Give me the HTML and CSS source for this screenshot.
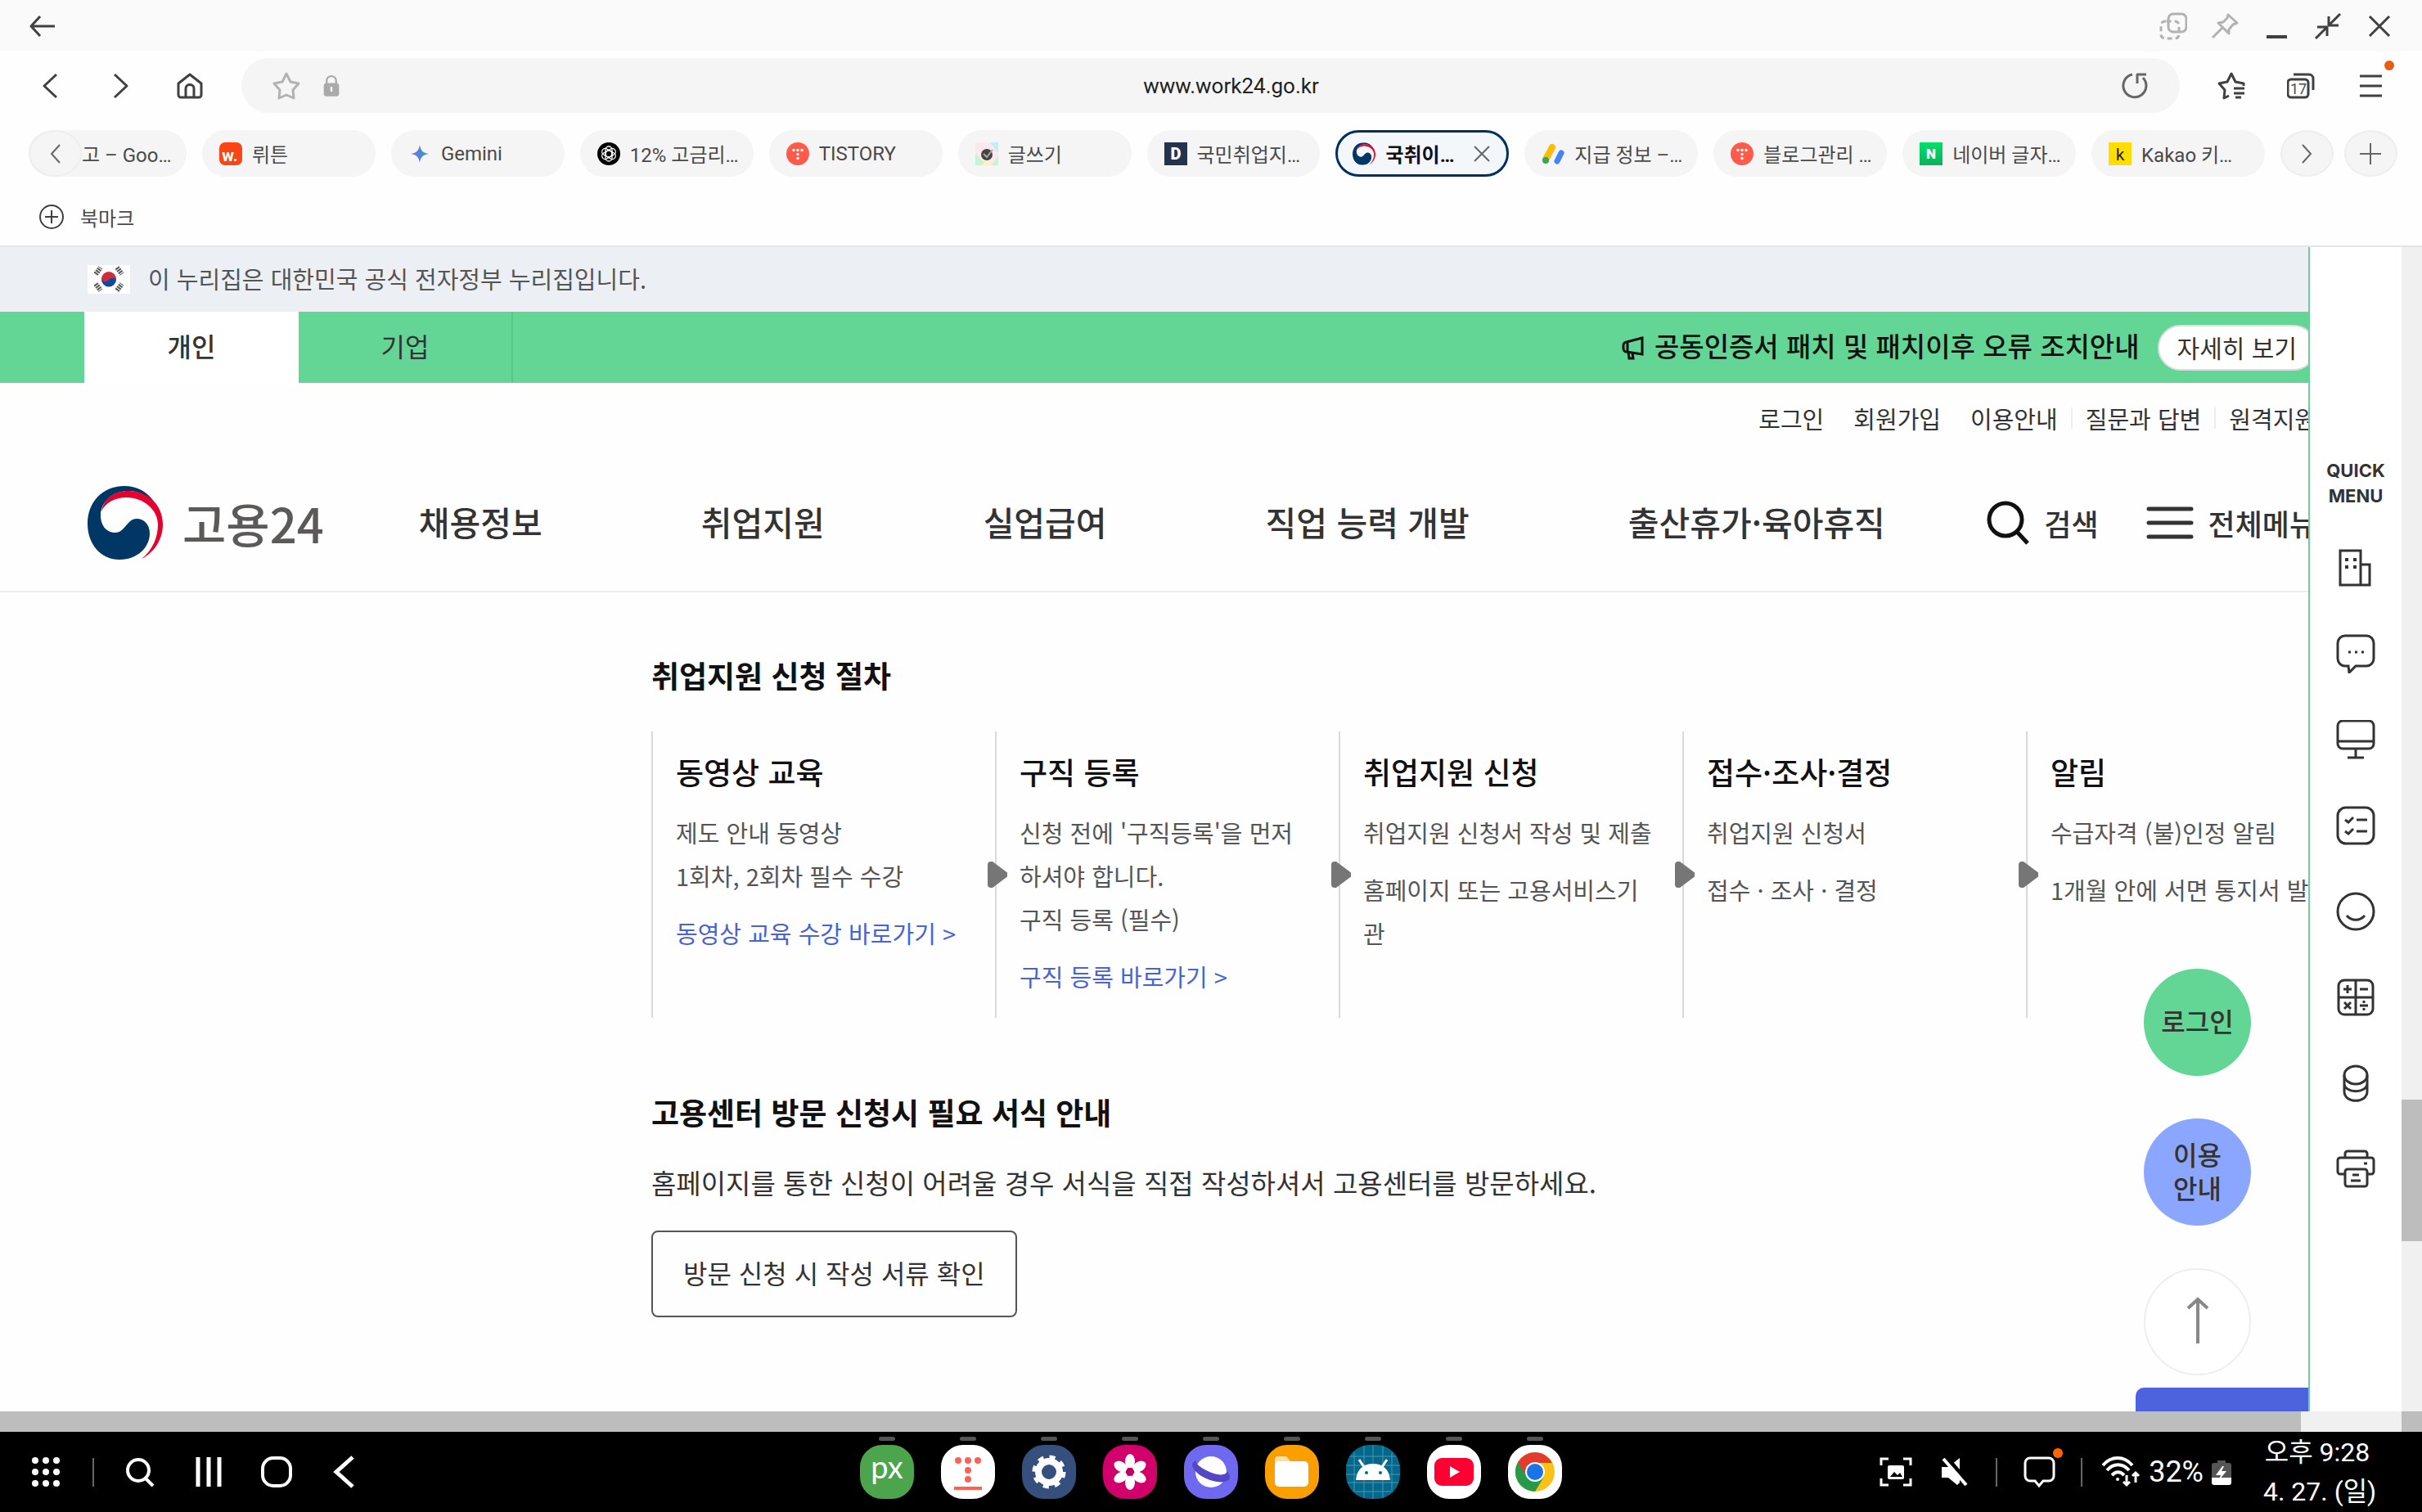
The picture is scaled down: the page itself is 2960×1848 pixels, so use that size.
FILE: index.html
```html
<!DOCTYPE html>
<html lang="ko">
<head>
    <meta charset="UTF-8">
    <meta name="viewport" content="width=device-width, initial-scale=1.0">
    <title>고용24</title>
    <link rel="stylesheet" href="styles.css">
</head>
<body>
    <svg class="sprite" aria-hidden="true">
        <symbol id="gov" viewBox="0 0 92 90">
            <path fill="#003764" d="M82 20C72 6 60 0 45 0 18 0 0 20 0 46c0 26 17 44 39 44 23 0 37-16 37-32 0-11-7-18-16-18-12 0-14 17-26 17-12 0-18-10-18-21C16 20 30 6 50 6c12 0 24 6 32 14z"/>
            <path fill="#e4032e" d="M17 31C20 15 33 6 50 6c25 0 42 18 42 41 0 18-10 34-26 42 14-11 20-27 20-42 0-18-18-33-38-33-15 0-27 7-31 17z"/>
        </symbol>
        <symbol id="tistory" viewBox="0 0 28 28">
            <circle cx="14" cy="14" r="14" fill="#ff5a4a"/>
            <g fill="#fff"><circle cx="9" cy="9.500" r="1.700"/><circle cx="14" cy="9.500" r="1.700"/><circle cx="19" cy="9.500" r="1.700"/><circle cx="14" cy="14.500" r="1.700"/><circle cx="14" cy="19.500" r="1.700"/></g>
        </symbol>
    </svg>

    <header class="titlebar">
        <button class="icon-btn" aria-label="뒤로"><svg viewBox="0 0 34 34"><path d="M14 5 3 17l11 12M3 17h29"/></svg></button>
        <div class="window-buttons">
            <button class="icon-btn dim" aria-label="팝업 화면"><svg viewBox="0 0 34 34"><rect x="11" y="2" width="22" height="22" rx="6"/><path stroke-dasharray="6 4" d="M8 11H7a5 5 0 0 0-5 5v11a5 5 0 0 0 5 5h12a5 5 0 0 0 5-5V16a5 5 0 0 0-5-5z"/></svg></button>
            <button class="icon-btn dim" aria-label="고정"><svg viewBox="0 0 34 34"><path d="M21 3 32 13l-5 2-5 6 0 5-13-13 6-1 5-5zM14 19 2 31"/></svg></button>
            <button class="icon-btn" aria-label="최소화"><svg viewBox="0 0 34 34"><path stroke-width="4" d="M5 30h25"/></svg></button>
            <button class="icon-btn" aria-label="축소"><svg viewBox="0 0 34 34"><path d="M32 2 19 15M18 5v11h12M2 32l13-13M4 18h12v11"/></svg></button>
            <button class="icon-btn" aria-label="닫기"><svg viewBox="0 0 34 34"><path d="M5 5l24 24M29 5 5 29"/></svg></button>
        </div>
    </header>

    <div class="toolbar">
        <div class="address-row">
            <button class="icon-btn" aria-label="이전"><svg viewBox="0 0 34 34"><path d="M24 3 9 17l15 14"/></svg></button>
            <button class="icon-btn" aria-label="다음"><svg viewBox="0 0 34 34"><path d="M10 3l15 14-15 14"/></svg></button>
            <button class="icon-btn" aria-label="홈"><svg viewBox="0 0 34 34"><path d="M3 14 17 3l14 11v14a3 3 0 0 1-3 3H6a3 3 0 0 1-3-3zM12 31V20c0-6 10-6 10 0v11"/></svg></button>
            <div class="address">
                <button class="icon-btn dim" aria-label="북마크 추가"><svg viewBox="0 0 34 34"><path d="M17 2l5 10 10 2-7 8 1 10-9-4-9 4 1-10-7-8 10-2z"/></svg></button>
                <svg class="lock" viewBox="0 0 20 24"><rect x="2" y="9" width="16" height="14" rx="3" fill="#aaa"/><path d="M5 10V7c0-7 10-7 10 0v3" fill="none" stroke="#aaa" stroke-width="2"/><path d="M10 13v5" stroke="#fff" stroke-width="2"/></svg>
                <input type="text" aria-label="주소" value="www.work24.go.kr">
                <button class="icon-btn mid" aria-label="새로고침"><svg viewBox="0 0 34 34"><path d="M14 3A14 14 0 1 0 27 7M20 14V3h11"/></svg></button>
            </div>
            <button class="icon-btn" aria-label="북마크 목록"><svg viewBox="0 0 34 34"><path d="M32 17V14l-10-2-5-10-5 10-10 2 7 8-1 10 6-3M20 20h13M20 26h13M22 31h7"/></svg></button>
            <button class="icon-btn tab-count" aria-label="탭"><svg viewBox="0 0 34 34"><rect x="1" y="9" width="25" height="22" rx="4"/><path d="M8 3h19a5 5 0 0 1 5 5v14"/></svg><span>17</span></button>
            <button class="icon-btn has-dot" aria-label="메뉴"><svg viewBox="0 0 34 34"><path d="M4 5h27M4 17h27M4 29h27"/></svg></button>
        </div>

        <nav class="tabs" aria-label="열린 탭">
            <div class="tab first"><button class="round-btn" aria-label="이전 탭"><svg viewBox="0 0 34 34"><path d="M22 6 12 17l10 11"/></svg></button><a href="#">고 – Goo…</a></div>
            <a class="tab" href="#"><svg viewBox="0 0 28 28"><rect width="28" height="28" rx="7" fill="#fa4616"/><text x="13" y="23" font-size="20" font-weight="bold" text-anchor="middle" fill="#fff">w.</text></svg>뤼튼</a>
            <a class="tab" href="#"><svg viewBox="0 0 28 28"><linearGradient id="gem"><stop stop-color="#a06bb0"/><stop offset=".5" stop-color="#4f86dc"/><stop offset="1" stop-color="#2da0d8"/></linearGradient><path fill="url(#gem)" d="M14 3c1 7 4 10 11 11-7 1-10 4-11 11-1-7-4-10-11-11 7-1 10-4 11-11z"/></svg>Gemini</a>
            <a class="tab" href="#"><svg viewBox="0 0 28 28"><circle cx="14" cy="14" r="14"/><g fill="none" stroke="#fff" stroke-width="1.300"><rect x="10" y="5" width="8" height="13" rx="4"/><rect x="10" y="5" width="8" height="13" rx="4" transform="rotate(60 14 14)"/><rect x="10" y="5" width="8" height="13" rx="4" transform="rotate(120 14 14)"/><rect x="10" y="5" width="8" height="13" rx="4" transform="rotate(180 14 14)"/><rect x="10" y="5" width="8" height="13" rx="4" transform="rotate(240 14 14)"/><rect x="10" y="5" width="8" height="13" rx="4" transform="rotate(300 14 14)"/></g></svg>12% 고금리…</a>
            <a class="tab" href="#"><svg viewBox="0 0 28 28"><use href="#tistory"/></svg>TISTORY</a>
            <a class="tab" href="#"><svg viewBox="0 0 28 28"><path fill="#fde8ee" d="M0 0h28v28H0z"/><path fill="#bdf0f0" d="M18 0h10v13z"/><path fill="#c5f5cd" d="M0 14l14 14H0zM28 16v12h-8z"/><path fill="#fdf3b8" d="M8 28l6-8 6 8z"/><circle cx="14" cy="15" r="7" fill="#444"/><path d="M10 14l4 4 7-9" fill="none" stroke="#aaa" stroke-width="2"/></svg>글쓰기</a>
            <a class="tab" href="#"><svg viewBox="0 0 28 28"><path fill="#25324f" d="M0 0h28v28H0z"/><text x="14" y="21" font-size="20" font-weight="900" text-anchor="middle" fill="#fff">D</text></svg>국민취업지…</a>
            <div class="tab active"><a href="#"><svg viewBox="0 0 92 90"><use href="#gov"/></svg>국취이…</a><button class="close" aria-label="탭 닫기"><svg viewBox="0 0 20 20"><path d="M1 1l18 18M19 1 1 19"/></svg></button></div>
            <a class="tab" href="#"><svg viewBox="0 0 28 28"><path d="M13 6 5 21" stroke="#fbbc04" stroke-width="8" stroke-linecap="round"/><path d="M24 13l-5 10" stroke="#4285f4" stroke-width="7" stroke-linecap="round"/><circle cx="5" cy="22" r="4" fill="#34a853"/></svg>지급 정보 –…</a>
            <a class="tab" href="#"><svg viewBox="0 0 28 28"><use href="#tistory"/></svg>블로그관리 …</a>
            <a class="tab" href="#"><svg viewBox="0 0 28 28"><linearGradient id="nav" x2="0" y2="1"><stop stop-color="#00e06a"/><stop offset="1" stop-color="#0bb25c"/></linearGradient><path fill="url(#nav)" d="M0 0h28v28H0z"/><text x="14" y="20" font-size="17" font-weight="900" text-anchor="middle" fill="#fff">N</text></svg>네이버 글자…</a>
            <a class="tab" href="#"><svg viewBox="0 0 28 28"><path fill="#fd0" d="M0 0h28v28H0z"/><text x="14" y="22" font-size="21" text-anchor="middle" fill="#222">k</text></svg>Kakao 키…</a>
            <button class="round-btn" aria-label="다음 탭"><svg viewBox="0 0 34 34"><path d="M12 6l10 11-10 11"/></svg></button>
            <button class="round-btn new-tab" aria-label="새 탭"><svg viewBox="0 0 34 34"><path d="M17 4v26M4 17h26"/></svg></button>
        </nav>

        <div class="bookmarks">
            <button class="icon-btn thin" aria-label="북마크 추가"><svg viewBox="0 0 34 34"><circle cx="17" cy="17" r="14"/><path d="M17 9v16M9 17h16"/></svg></button>
            <a href="#">북마크</a>
        </div>
    </div>

    <div class="viewport">
        <main class="site">
            <div class="gov-banner">
                <svg viewBox="0 0 52 35"><path fill="#fff" d="M0 0h52v35H0z"/><circle cx="26" cy="17" r="9" fill="#cd2e3a"/><path fill="#0f4aa0" d="M17 17c2 4 6 4 9 1s7-3 9 0a9 9 0 0 1-18-1z"/><path stroke="#555" stroke-width="6" stroke-dasharray="2 1" d="M10 11l6-8M36 31l6-8M10 23l6 8M36 3l6 8"/></svg>
                <p>이 누리집은 대한민국 공식 전자정부 누리집입니다.</p>
            </div>

            <div class="member-bar">
                <a class="member on" href="#">개인</a>
                <a class="member" href="#">기업</a>
                <p class="notice"><svg viewBox="0 0 30 30"><path d="M27 3v20L8 20a4 4 0 0 1-4-4v-4a4 4 0 0 1 4-4zM9 9v11M10 21l1 7h5l-1-6" fill="none" stroke="#111" stroke-width="3"/></svg>공동인증서 패치 및 패치이후 오류 조치안내</p>
                <button class="more">자세히 보기</button>
            </div>

            <header class="site-header">
                <ul class="util">
                    <li><a href="#">로그인</a></li>
                    <li><a href="#">회원가입</a></li>
                    <li><a href="#">이용안내</a></li>
                    <li class="line"><a href="#">질문과 답변</a></li>
                    <li class="line"><a href="#">원격지원</a></li>
                </ul>
                <div class="gnb">
                    <a class="logo" href="#"><svg viewBox="0 0 92 90"><use href="#gov"/></svg>고용24</a>
                    <nav class="menu">
                        <a href="#">채용정보</a>
                        <a href="#">취업지원</a>
                        <a href="#">실업급여</a>
                        <a href="#">직업 능력 개발</a>
                        <a href="#">출산휴가·육아휴직</a>
                    </nav>
                    <div class="tools">
                        <button><svg class="search-icon" viewBox="0 0 52 54"><circle cx="23" cy="23" r="20" fill="none" stroke="#111" stroke-width="5"/><path d="M37 38l13 14" stroke="#111" stroke-width="5"/></svg>검색</button>
                        <button><svg class="menu-icon" viewBox="0 0 58 42"><path d="M3 4h52M3 21h52M3 38h52" stroke="#333" stroke-width="5" stroke-linecap="round"/></svg>전체메뉴</button>
                    </div>
                </div>
            </header>

            <div class="content">
                <section>
                    <h2>취업지원 신청 절차</h2>
                    <ol class="steps">
                        <li>
                            <h3>동영상 교육</h3>
                            <p>제도 안내 동영상<br>1회차, 2회차 필수 수강</p>
                            <a href="#">동영상 교육 수강 바로가기 &gt;</a>
                        </li>
                        <li>
                            <h3>구직 등록</h3>
                            <p>신청 전에 '구직등록'을 먼저<br>하셔야 합니다.<br>구직 등록 (필수)</p>
                            <a href="#">구직 등록 바로가기 &gt;</a>
                        </li>
                        <li>
                            <h3>취업지원 신청</h3>
                            <p>취업지원 신청서 작성 및 제출</p>
                            <p>홈페이지 또는 고용서비스기관</p>
                        </li>
                        <li>
                            <h3>접수·조사·결정</h3>
                            <p>취업지원 신청서</p>
                            <p>접수 · 조사 · 결정</p>
                        </li>
                        <li>
                            <h3>알림</h3>
                            <p>수급자격 (불)인정 알림</p>
                            <p>1개월 안에 서면 통지서 발송</p>
                        </li>
                    </ol>
                </section>

                <section class="visit">
                    <h2>고용센터 방문 신청시 필요 서식 안내</h2>
                    <p>홈페이지를 통한 신청이 어려울 경우 서식을 직접 작성하셔서 고용센터를 방문하세요.</p>
                    <button class="outline-btn">방문 신청 시 작성 서류 확인</button>
                </section>
            </div>

            <div class="floating">
                <a class="circle green" href="#">로그인</a>
                <a class="circle blue" href="#">이용<br>안내</a>
                <a class="circle top" href="#" aria-label="맨 위로"><svg viewBox="0 0 28 58"><path d="M14 57V4M2 14 14 3l12 11" fill="none" stroke="#888" stroke-width="4"/></svg></a>
            </div>
            <div class="chat-panel"></div>
        </main>

        <aside class="quick">
            <strong>QUICK<br>MENU</strong>
            <a href="#" aria-label="기업"><svg viewBox="0 0 48 48"><path d="M5 3h25v42H5zM30 20h11v25H30z"/><path stroke-width="4" stroke-dasharray="4 6" d="M11 14h14M11 23h14"/></svg></a>
            <a href="#" aria-label="상담"><svg viewBox="0 0 48 48"><path d="M11 2h26a9 9 0 0 1 9 9v19a9 9 0 0 1-9 9H24l-8 8-1-8h-4a9 9 0 0 1-9-9V11a9 9 0 0 1 9-9z"/><path stroke-width="3" stroke-dasharray="3 5" d="M15 22h20"/></svg></a>
            <a href="#" aria-label="화면"><svg viewBox="0 0 48 48"><rect x="2" y="1" width="44" height="34" rx="6"/><path d="M2 26h44M24 35v11M14 46h20"/></svg></a>
            <a href="#" aria-label="체크리스트"><svg viewBox="0 0 48 48"><rect x="2" y="2" width="44" height="44" rx="10"/><path d="M11 17l4 3 6-6M25 17h13M11 31l4 3 6-6M25 31h13"/></svg></a>
            <a href="#" aria-label="만족도"><svg viewBox="0 0 48 48"><circle cx="24" cy="24" r="22"/><path d="M13 29c6 7 16 7 22 0"/></svg></a>
            <a href="#" aria-label="계산기"><svg viewBox="0 0 48 48"><rect x="3" y="3" width="42" height="42" rx="7"/><path d="M24 3v42M3 24h42M9 14h10M14 9v10M29 14h10M10 30l8 8M18 30l-8 8M29 34h10M34 28v3M34 37v3"/></svg></a>
            <a href="#" aria-label="지원금"><svg viewBox="0 0 48 48"><ellipse cx="24" cy="14" rx="14" ry="11"/><path d="M10 14v20c0 15 28 15 28 0V14M10 24c0 13 28 13 28 0"/></svg></a>
            <a href="#" aria-label="인쇄"><svg viewBox="0 0 48 48"><path d="M11 10V5a3 3 0 0 1 3-3h21a3 3 0 0 1 3 3v5M11 30H5a3 3 0 0 1-3-3V13a3 3 0 0 1 3-3h38a3 3 0 0 1 3 3v14a3 3 0 0 1-3 3h-5M34 17h4M20 31h8M18 38h12"/><rect x="11" y="24" width="27" height="21" rx="3"/></svg></a>
        </aside>
        <div class="scroll-y"><div class="thumb"></div></div>
    </div>
    <div class="scroll-x"><div class="thumb"></div><div class="corner"></div></div>

    <footer class="taskbar">
        <div class="task-left">
            <button aria-label="앱 목록"><svg viewBox="0 0 40 40"><g fill="#fff" stroke="none"><circle cx="7" cy="6" r="4"/><circle cx="20" cy="6" r="4"/><circle cx="33" cy="6" r="4"/><circle cx="7" cy="20" r="4"/><circle cx="20" cy="20" r="4"/><circle cx="33" cy="20" r="4"/><circle cx="7" cy="34" r="4"/><circle cx="20" cy="34" r="4"/><circle cx="33" cy="34" r="4"/></g></svg></button>
            <span class="divider"></span>
            <button aria-label="검색"><svg viewBox="0 0 40 40"><circle cx="17" cy="18" r="13"/><path d="M26 28l9 9"/></svg></button>
            <button aria-label="최근 앱"><svg viewBox="0 0 40 40"><path stroke-width="5" d="M7 2v36M20 2v36M33 2v36"/></svg></button>
            <button aria-label="홈 화면"><svg viewBox="0 0 40 40"><rect x="3" y="3" width="34" height="34" rx="13"/></svg></button>
            <button aria-label="뒤로 가기"><svg viewBox="0 0 40 40"><path stroke-width="5" d="M30 2 10 20l20 18"/></svg></button>
        </div>

        <div class="apps">
            <a class="app" href="#" aria-label="Pixabay"><svg viewBox="0 0 66 66"><rect width="66" height="66" rx="27" fill="#4ca54c"/><text x="33" y="41" font-family="Lato" font-size="38" text-anchor="middle" fill="#fff">px</text></svg></a>
            <a class="app" href="#" aria-label="티스토리"><svg viewBox="0 0 66 66"><rect width="66" height="66" rx="27" fill="#fff"/><g fill="#f76455"><circle cx="21" cy="19" r="4"/><circle cx="33" cy="19" r="4"/><circle cx="45" cy="19" r="4"/><circle cx="33" cy="31" r="4"/><circle cx="33" cy="42" r="4"/><path d="M16 51h34v4H16z"/></g></svg></a>
            <a class="app" href="#" aria-label="설정"><svg viewBox="0 0 66 66"><rect width="66" height="66" rx="27" fill="#35507c"/><circle cx="33" cy="33" r="13" fill="none" stroke="#fff" stroke-width="8"/><circle cx="33" cy="33" r="18" fill="none" stroke="#fff" stroke-width="5" stroke-dasharray="7 7.140"/></svg></a>
            <a class="app" href="#" aria-label="갤러리"><svg viewBox="0 0 66 66"><rect width="66" height="66" rx="27" fill="#d1006a"/><g fill="#fff"><ellipse cx="33" cy="20" rx="6" ry="9"/><ellipse cx="33" cy="20" rx="6" ry="9" transform="rotate(60 33 33)"/><ellipse cx="33" cy="20" rx="6" ry="9" transform="rotate(120 33 33)"/><ellipse cx="33" cy="20" rx="6" ry="9" transform="rotate(180 33 33)"/><ellipse cx="33" cy="20" rx="6" ry="9" transform="rotate(240 33 33)"/><ellipse cx="33" cy="20" rx="6" ry="9" transform="rotate(300 33 33)"/></g><circle cx="33" cy="33" r="5" fill="#c4005f"/></svg></a>
            <a class="app" href="#" aria-label="인터넷"><svg viewBox="0 0 66 66"><rect width="66" height="66" rx="27" fill="#6f69ef"/><circle cx="33" cy="33" r="19" fill="#fff"/><path d="M15 19c-8 2-6 12 8 20 16 9 34 8 33 0 0-3-2-5-4-7 1 6-13 6-25-1-9-5-14-9-12-12z" fill="#5546c4"/></svg></a>
            <a class="app" href="#" aria-label="내 파일"><svg viewBox="0 0 66 66"><rect width="66" height="66" rx="27" fill="#fb9f00"/><path fill="#ffdf9e" d="M12 18a4 4 0 0 1 4-4h10l6 7v8H12z"/><rect x="12" y="20" width="41" height="31" rx="5" fill="#fff"/></svg></a>
            <a class="app" href="#" aria-label="Android"><svg viewBox="0 0 66 66"><rect width="66" height="66" rx="29" fill="#03688b"/><path stroke="#4a97af" d="M10 9v48M22 1v64M33 0v66M45 1v64M56 9v48M5 14h56M0 25h66M0 36h66M2 46h62M11 57h44"/><path fill="#fff" d="M12 43c1-13 9-20 21-20s20 7 21 20z"/><path stroke="#fff" stroke-width="3" d="M16 18l6 9M50 18l-6 9"/><circle cx="25" cy="34" r="2" fill="#03688b"/><circle cx="42" cy="34" r="2" fill="#03688b"/></svg></a>
            <a class="app" href="#" aria-label="YouTube"><svg viewBox="0 0 66 66"><rect width="66" height="66" rx="27" fill="#fff"/><rect x="9" y="16" width="48" height="34" rx="9" fill="#f03"/><path fill="#fff" d="M28 26v14l12-7z"/></svg></a>
            <a class="app" href="#" aria-label="Chrome"><svg viewBox="0 0 66 66"><rect width="66" height="66" rx="27" fill="#fff"/><circle cx="33" cy="33" r="24" fill="#fbc116"/><path fill="#269a48" d="M12 21a24 24 0 0 0 21 36l11-18-11-6z"/><path fill="#e33b2e" d="M12 21l11 18 10-17h21a24 24 0 0 0-42-1z"/><circle cx="33" cy="33" r="12" fill="#fff"/><circle cx="33" cy="33" r="10" fill="#1a73e8"/></svg></a>
        </div>

        <div class="task-right">
            <svg viewBox="0 0 40 40"><path d="M2 12V4h9M29 4h9v8M2 28v8h9M29 36h9v-8" stroke-width="3"/><rect x="10" y="12" width="20" height="17" rx="2" fill="#fff" stroke="none"/><path d="M13 26l5-6 4 4 3-3 3 5z" fill="#000" stroke="none"/></svg>
            <svg viewBox="0 0 40 40"><path fill="#fff" stroke="none" d="M5 14h8L27 3v30l-3 3-11-9H5z"/><path stroke="#000" stroke-width="5" d="M11 2l28 33"/><path d="M7 4l28 32"/></svg>
            <span class="divider"></span>
            <span class="has-dot"><svg viewBox="0 0 40 40"><path stroke-width="3" d="M9 3h23a6 6 0 0 1 6 6v16a6 6 0 0 1-6 6h-7l-5 6-5-6H9a6 6 0 0 1-6-6V9a6 6 0 0 1 6-6z"/></svg></span>
            <span class="divider"></span>
            <span class="status">
                <svg class="wifi" viewBox="0 0 48 40"><path d="M2 12c10-12 26-12 36 0M7 18c8-9 19-9 27 0M13 24c5-5 10-5 15 0"/><circle cx="20" cy="29" r="2" fill="#fff" stroke="none"/><path stroke-width="3" d="M31 24v12M27 32l4 4 4-4M42 33V21M38 25l4-4 4 4"/></svg>
                32%
                <svg class="battery" viewBox="0 0 24 32"><path fill="#555" stroke="none" d="M7 2h10v3h4a3 3 0 0 1 3 3v15H0V8a3 3 0 0 1 3-3h4z"/><path fill="#fff" stroke="none" d="M0 23h24v6a3 3 0 0 1-3 3H3a3 3 0 0 1-3-3z"/><path fill="#fff" stroke="none" d="M13 9 5 20h6l-2 6 9-11h-6l3-6z"/></svg>
            </span>
            <time>오후 9:28<br>4. 27. (일)</time>
        </div>
    </footer>
</body>
</html>
```
FILE: styles.css
```css
* {
    box-sizing: border-box;
}

body {
    margin: 0;
    height: 100vh;
    display: flex;
    flex-direction: column;
    overflow: hidden;
    background-color: #fefefe;
    color: #333;
    font-family: "Noto Sans CJK KR", sans-serif;
}

h2, h3, p, ul, ol {
    margin: 0;
    padding: 0;
    list-style: none;
}

a {
    color: inherit;
    text-decoration: none;
}

button {
    padding: 0;
    border: none;
    background: none;
    color: inherit;
    font: inherit;
    cursor: pointer;
}

svg {
    display: block;
    flex: none;
}

.sprite {
    display: none;
}

/* browser window */
.titlebar {
    display: flex;
    justify-content: space-between;
    align-items: center;
    flex: none;
    height: 63px;
    padding: 0 35px;
    background-color: #fafafa;
}

.window-buttons {
    display: flex;
    gap: 29px;
}

.icon-btn {
    position: relative;
    flex: none;
    width: 34px;
    height: 34px;
}

.icon-btn svg {
    width: 34px;
    height: 34px;
    fill: none;
    stroke: #404040;
    stroke-width: 3;
    stroke-linejoin: round;
}

.icon-btn.dim svg {
    stroke: #b2b2b2;
}

.icon-btn.mid svg {
    stroke: #666;
}

.icon-btn.thin svg {
    stroke-width: 2;
}

.toolbar {
    flex: none;
    padding-top: 8px;
    border-bottom: 2px solid #e3e5e7;
    font-family: Roboto, "Noto Sans CJK KR", sans-serif;
    font-size: 24px;
    color: #4a4a4a;
}

.address-row {
    display: flex;
    align-items: center;
    gap: 51px;
    padding: 0 46px 0 45px;
}

.address {
    flex: 1;
    display: flex;
    align-items: center;
    height: 67px;
    margin: 0 -5px;
    padding: 0 38px;
    border-radius: 34px;
    background-color: #f5f5f5;
}

.lock {
    width: 24px;
    height: 28px;
    margin-left: 26px;
}

.address input {
    flex: 1;
    min-width: 0;
    border: none;
    outline: none;
    background: none;
    text-align: center;
    font-family: Roboto, sans-serif;
    font-size: 26px;
    color: #222;
}

.tab-count span {
    position: absolute;
    left: 2px;
    top: 9px;
    width: 24px;
    text-align: center;
    font-size: 18px;
    line-height: 24px;
}

.has-dot {
    position: relative;
}

.has-dot::after {
    content: "";
    position: absolute;
    top: -14px;
    right: -12px;
    width: 12px;
    height: 12px;
    border-radius: 50%;
    background-color: #ea5b14;
}

.tabs {
    display: flex;
    gap: 19px;
    margin-top: 21px;
    padding: 0 30px 0 35px;
}

.tab {
    flex: 1 1 200px;
    min-width: 0;
    display: flex;
    align-items: center;
    gap: 12px;
    height: 57px;
    padding-left: 21px;
    border-radius: 29px;
    background-color: #f5f5f5;
    white-space: nowrap;
}

.tab > svg,
.tab a svg {
    width: 28px;
    height: 28px;
}

.tab.first {
    flex: none;
    width: 193px;
    gap: 0;
    padding: 0;
}

.tab.active {
    justify-content: space-between;
    padding: 0 20px 0 18px;
    border: 3px solid #00305f;
    background-color: #f4f7fa;
    color: #111;
    font-weight: bold;
}

.tab.active a {
    display: flex;
    align-items: center;
    gap: 12px;
}

.close svg {
    width: 20px;
    height: 20px;
    fill: none;
    stroke: #666;
    stroke-width: 2;
}

.round-btn {
    flex: none;
    display: flex;
    justify-content: center;
    align-items: center;
    width: 65px;
    height: 57px;
    border: 2px solid #eeeeee;
    border-radius: 50%;
    background-color: #f5f5f5;
}

.new-tab {
    margin-left: -6px;
}

.round-btn svg {
    width: 34px;
    height: 34px;
    fill: none;
    stroke: #666;
    stroke-width: 2;
}

.bookmarks {
    display: flex;
    align-items: center;
    gap: 18px;
    height: 84px;
    padding: 14px 46px 0;
}

/* page area */
.viewport {
    flex: 1;
    min-height: 0;
    display: flex;
}

.site {
    position: relative;
    flex: 1;
    min-width: 0;
    overflow: hidden;
}

.gov-banner {
    display: flex;
    align-items: center;
    gap: 22px;
    height: 79px;
    padding-left: 107px;
    background-color: #ecf0f5;
    font-size: 29px;
    line-height: 42px;
    color: #555;
}

.gov-banner p {
    padding-bottom: 4px;
}

.gov-banner svg {
    width: 52px;
    height: 35px;
}

.member-bar {
    display: flex;
    align-items: center;
    width: calc(100% + 10px);
    height: 87px;
    padding-left: 103px;
    background-color: #63d594;
    white-space: nowrap;
}

.member {
    width: 262px;
    padding-bottom: 4px;
    border-right: 2px solid #5cc68a;
    text-align: center;
    font-size: 32px;
    line-height: 83px;
}

.member.on {
    background-color: #fff;
    border: none;
    font-weight: 500;
}

.notice {
    display: flex;
    align-items: center;
    gap: 12px;
    margin-left: auto;
    padding-bottom: 5px;
    font-size: 33px;
    font-weight: 500;
    color: #111;
}

.notice svg {
    width: 30px;
    height: 30px;
    margin-top: 6px;
}

.more {
    height: 56px;
    margin-left: 22px;
    padding: 0 22px 2px;
    border: 2px solid #ddd;
    border-radius: 28px;
    background-color: #fff;
    font-size: 30px;
    line-height: 50px;
}

.site-header {
    width: calc(100% + 10px);
    border-bottom: 2px solid #eee;
    white-space: nowrap;
}

.util {
    display: flex;
    justify-content: flex-end;
    align-items: center;
    gap: 36px;
    height: 88px;
    padding-bottom: 3px;
    font-size: 29px;
}

.util .line {
    margin-left: -20px;
    padding-left: 16px;
    border-left: 2px solid #eee;
    line-height: 26px;
}

.gnb {
    display: flex;
    align-items: center;
    height: 166px;
    padding-left: 107px;
}

.logo {
    display: flex;
    align-items: center;
    gap: 24px;
    font-size: 58px;
    font-weight: 500;
    color: #5b5a58;
}

.logo svg {
    width: 92px;
    height: 90px;
}

.menu {
    display: flex;
    gap: 194px;
    margin-left: 116px;
    padding-bottom: 4px;
    font-size: 41px;
    font-weight: 500;
}

.tools {
    display: flex;
    gap: 58px;
    margin-left: auto;
    font-size: 36px;
    font-weight: 500;
}

.tools button {
    display: flex;
    align-items: center;
    gap: 18px;
}

.search-icon {
    width: 52px;
    height: 54px;
}

.menu-icon {
    width: 58px;
    height: 42px;
}

.content {
    padding: 73px 0 0 796px;
    white-space: nowrap;
}

.content h2,
.content h3 {
    font-size: 37px;
    font-weight: 500;
    line-height: 56px;
    color: #111;
}

.content h2 {
    font-weight: 600;
}

.steps {
    display: grid;
    grid-template-columns: repeat(5, 420px);
    margin-top: 41px;
    font-size: 29px;
    line-height: 53px;
    color: #555;
}

.steps li {
    position: relative;
    padding: 21px 28px 24px;
    border-left: 2px solid #d9d9d9;
    white-space: normal;
}

.steps p {
    margin-bottom: 17px;
}

.steps h3 {
    margin-bottom: 20px;
}

.steps a {
    color: #4a63d0;
}

.steps li + li::before {
    content: "";
    position: absolute;
    left: -11px;
    top: 50%;
    width: 24px;
    height: 32px;
    margin-top: -16px;
    border-radius: 4px;
    background-color: #767676;
    clip-path: polygon(0 0, 25% 0, 100% 42%, 100% 58%, 25% 100%, 0 100%);
}

.visit {
    margin-top: 87px;
}

.visit p {
    margin-top: 30px;
    font-size: 33px;
    line-height: 56px;
}

.outline-btn {
    height: 106px;
    margin-top: 31px;
    padding: 0 37px 4px;
    border: 2px solid #555;
    border-radius: 8px;
    font-size: 32px;
}

/* buttons over the page */
.floating {
    position: absolute;
    right: 70px;
    bottom: 44px;
    display: flex;
    flex-direction: column;
    gap: 52px;
}

.circle {
    display: flex;
    justify-content: center;
    align-items: center;
    width: 131px;
    height: 131px;
    padding-bottom: 4px;
    border-radius: 50%;
    font-size: 32px;
    font-weight: 500;
    line-height: 41px;
}

.circle.green {
    background-color: #63d594;
}

.circle.blue {
    background-color: #8ba6ff;
}

.circle.top {
    border: 2px solid #eee;
    background-color: #fff;
}

.circle svg {
    width: 28px;
    height: 58px;
}

.chat-panel {
    position: absolute;
    right: 0;
    bottom: 0;
    width: 211px;
    height: 29px;
    border-top-left-radius: 10px;
    background-color: #4d63de;
}

.quick {
    flex: none;
    display: flex;
    flex-direction: column;
    align-items: center;
    gap: 57px;
    width: 114px;
    padding-top: 258px;
    border-left: 2px solid #6fcc9c;
    background-color: #fff;
}

.quick strong {
    margin-bottom: -9px;
    text-align: center;
    font-family: Inter, sans-serif;
    font-size: 22px;
    line-height: 31px;
}

.quick svg {
    width: 48px;
    height: 48px;
    fill: none;
    stroke: #333;
    stroke-width: 3;
}

.scroll-y {
    flex: none;
    width: 25px;
    padding-top: 1042px;
    background-color: #f0f0f0;
}

.scroll-y .thumb {
    height: 173px;
    background-color: #bdbdbd;
}

.scroll-x {
    flex: none;
    display: flex;
    justify-content: space-between;
    height: 25px;
    background-color: #f0f0f0;
}

.scroll-x .thumb {
    width: 95%;
    background-color: #bdbdbd;
}

.scroll-x .corner {
    width: 25px;
    background-color: #bdbdbd;
}

/* system bar */
.taskbar {
    flex: none;
    display: grid;
    grid-template-columns: 1fr auto 1fr;
    align-items: center;
    height: 98px;
    padding: 0 36px;
    overflow: hidden;
    background-color: #000;
    color: #fff;
    font-family: Roboto, "Noto Sans CJK KR", sans-serif;
}

.task-left,
.task-right {
    display: flex;
    align-items: center;
}

.task-left {
    gap: 43px;
}

.task-right {
    justify-content: flex-end;
    gap: 31px;
}

.taskbar svg {
    width: 40px;
    height: 40px;
}

.task-left svg,
.task-right svg {
    fill: none;
    stroke: #fff;
    stroke-width: 4;
}

.divider {
    width: 2px;
    height: 35px;
    background-color: #666;
}

.task-left .divider {
    margin: 0 -6px;
}

.apps {
    display: flex;
    gap: 33px;
}

.app {
    display: flex;
    flex-direction: column;
    align-items: center;
    gap: 5px;
    padding-bottom: 10px;
}

.app::before {
    content: "";
    width: 20px;
    height: 5px;
    border-radius: 3px;
    background-color: #555;
}

.app svg {
    width: 66px;
    height: 66px;
}

.task-right .has-dot::after {
    top: -9px;
    right: -9px;
    background-color: #ff6400;
}

.status {
    display: flex;
    align-items: center;
    gap: 10px;
    margin-left: -8px;
    font-size: 36px;
}

.status .wifi {
    width: 48px;
}

.status .battery {
    width: 24px;
    height: 32px;
}

time {
    width: 132px;
    margin: 0 26px 0 8px;
    text-align: center;
    font-size: 32px;
    line-height: 48px;
    white-space: nowrap;
}
```
